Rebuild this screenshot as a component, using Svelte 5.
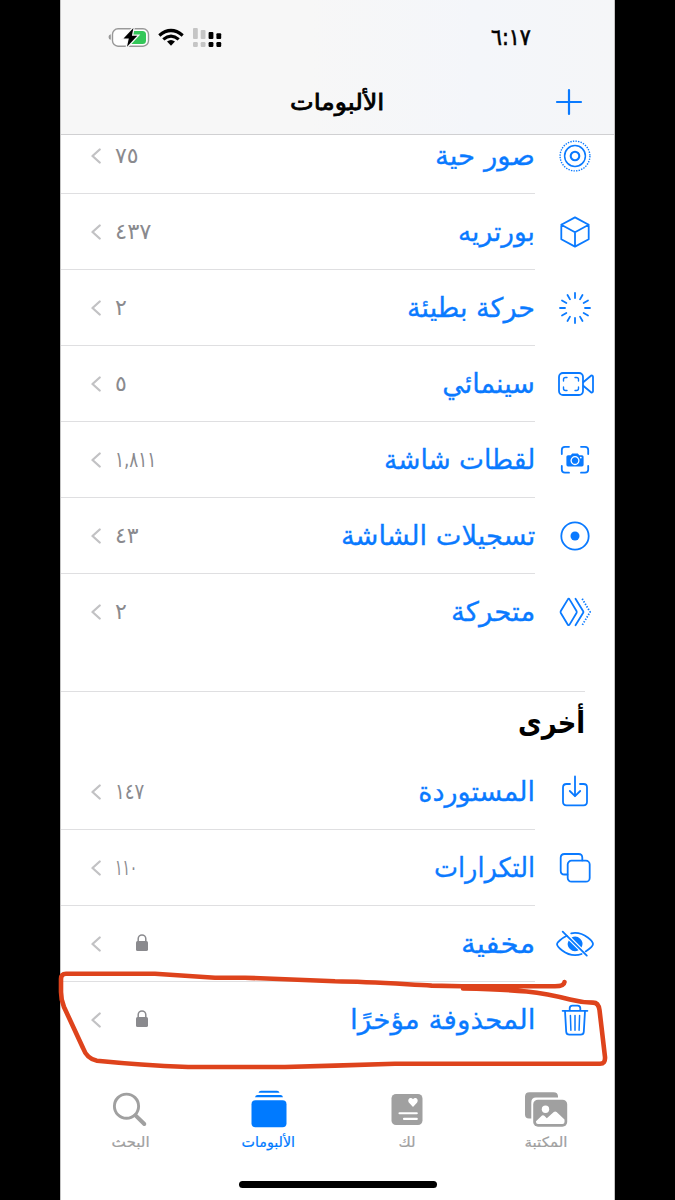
<script>
	// span: drawn width of the text in px
	const mediaTypes = [
		{ icon: 'live', label: 'صور حية', span: 100, count: '٧٥', countSpan: 24 },
		{ icon: 'cube', label: 'بورتريه', span: 77, count: '٤٣٧', countSpan: 36 },
		{ icon: 'slomo', label: 'حركة بطيئة', span: 128, count: '٢', countSpan: 12 },
		{ icon: 'cinematic', label: 'سينمائي', span: 93, count: '٥', countSpan: 12 },
		{ icon: 'screenshot', label: 'لقطات شاشة', span: 151, count: '١,٨١١', countSpan: 41 },
		{ icon: 'recording', label: 'تسجيلات الشاشة', span: 194, count: '٤٣', countSpan: 24 },
		{ icon: 'animated', label: 'متحركة', span: 84, count: '٢', countSpan: 12 }
	];

	const utilities = [
		{ icon: 'import', label: 'المستوردة', span: 117, count: '١٤٧', countSpan: 29 },
		{ icon: 'copies', label: 'التكرارات', span: 101, count: '١١٠', countSpan: 22 },
		{ icon: 'hidden', label: 'مخفية', span: 74, locked: true },
		{ icon: 'trash', label: 'المحذوفة مؤخرًا', span: 185, locked: true }
	];

	const tabs = [
		{ icon: 'library', label: 'المكتبة', span: 43 },
		{ icon: 'foryou', label: 'لك', span: 17 },
		{ icon: 'albums', label: 'الألبومات', span: 54, active: true },
		{ icon: 'search', label: 'البحث', span: 38 }
	];

	const ticks = Array.from({ length: 12 }, (_, i) => i * 30);

	// squeeze the text horizontally to the wanted width
	function fit(node, width) {
		node.style.transform = `scaleX(${width / node.offsetWidth})`;
	}
</script>

{#snippet rowIcon(name)}
	<svg class="row-icon" width="40" height="40" viewBox="-20 -20 40 40">
		{#if name === 'live'}
			<circle r="4.3" stroke-width="2.1" />
			<circle r="10.4" stroke-width="1.5" />
			<circle r="14.9" stroke-width="1.4" stroke-linecap="butt" stroke-dasharray="1.4 1.2" />
		{:else if name === 'cube'}
			<path d="M0-14.6 13.7-7.3V7.3L0 14.6-13.7 7.3V-7.3ZM-13.7-7.3 0 .2 13.7-7.3M0 .2V14.6" />
		{:else if name === 'slomo'}
			{#each ticks as angle}
				<path d="M0-15V-10" transform="rotate({angle})" />
			{/each}
		{:else if name === 'cinematic'}
			<rect x="-16" y="-11" width="24" height="22" rx="4" />
			<path d="M8.5-2 16-8.3Q18-9 18-7V7Q18 9 16 8.3L8.5 2" />
			<path stroke-width="1.4" d="M-11.5-3V-4.5Q-11.5-6.5-9.5-6.5H-8M0-6.5H1.5Q3.5-6.5 3.5-4.5V-3M3.5 3V4.5Q3.5 6.5 1.5 6.5H0M-8 6.5H-9.5Q-11.5 6.5-11.5 4.5V3" />
		{:else if name === 'screenshot'}
			<path d="M-13.2-6V-10Q-13.2-13.2-10-13.2H-6M6-13.2H10Q13.2-13.2 13.2-10V-6M13.2 6V9.5Q13.2 12.7 10 12.7H6M-6 12.7H-10Q-13.2 12.7-13.2 9.5V6" />
			<path class="solid" d="M-7-4.8H-4.3L-2.8-6.6H2.8L4.3-4.8H7Q8.6-4.8 8.6-3.2V4.8Q8.6 6.4 7 6.4H-7Q-8.6 6.4-8.6 4.8V-3.2Q-8.6-4.8-7-4.8Z" />
			<circle class="knockout" cy=".6" r="3.9" />
			<circle class="dot" cx="5.8" cy="-2.4" r=".9" />
		{:else if name === 'recording'}
			<circle r="13.7" />
			<circle class="solid" r="4.5" />
		{:else if name === 'animated'}
			<path d="M-6.3-13.3Q-5.8-13.3-5.3-12.4L1.5-1Q2 0 1.5 1L-5.3 12.4Q-6.3 14-7.3 12.4L-14.2 1Q-14.7 0-14.2-1L-7.3-12.4Q-6.8-13.3-6.3-13.3Z" />
			<path d="M.5-13.2 8.2-.8Q8.7 0 8.2.8L.5 13.2" />
			<path stroke-dasharray="1.4 1.5" stroke-linecap="butt" d="M7.2-13.2 15.1 0 7.2 13.2" />
		{:else if name === 'import'}
			<path d="M-5-8H-8.5Q-12-8-12-4.5V9.8Q-12 13.3-8.5 13.3H8.5Q12 13.3 12 9.8V-4.5Q12-8 8.5-8H5" />
			<path d="M0-15.5V4.2M-5.2-1 0 4.2 5.2-1" />
		{:else if name === 'copies'}
			<path d="M-7.6 6.5H-10.5Q-14.3 6.5-14.3 2.7V-10.2Q-14.3-14 -10.5-14H3.5Q7.3-14 7.3-10.2V-7.6" />
			<rect x="-7.3" y="-7.3" width="22" height="21" rx="3.8" />
		{:else if name === 'hidden'}
			<path d="M-8.2-8.2C-14-5.3-18-1.4-18 0-18 2.5-10 11.2 0 11.2 2.4 11.2 4.6 10.8 6.6 10M-3.8-10.7C-2.6-11-1.3-11.2 0-11.2 10-11.2 18-2.5 18 0 18 1.4 15 4.7 10.6 7.4" />
			<path class="solid" d="M-6.3-3.6A7.3 7.3 0 0 0 3.6 6.3ZM-3.4-6.5A7.3 7.3 0 0 1 6.5 3.4Z" />
			<path d="M-12.3-12.3 11.8 11.6" />
		{:else if name === 'trash'}
			<path d="M-12.4-9.2H12.4M-5.3-9.5V-11.7Q-5.3-14.4-2.6-14.4H2.6Q5.3-14.4 5.3-11.7V-9.5M-10-9-8.8 11.7Q-8.6 14.7-5.6 14.7H5.6Q8.6 14.7 8.8 11.7L10-9" />
			<path stroke-width="1.5" d="M-4.6-4.6-4.1 10.2M0-4.6V10.2M4.6-4.6 4.1 10.2" />
		{/if}
	</svg>
{/snippet}

{#snippet row(item)}
	<li class="row">
		<div class="icon-cell">{@render rowIcon(item.icon)}</div>
		<div class="row-body">
			<span class="label" use:fit={item.span}>{item.label}</span>
			<span class="detail">
				{#if item.locked}
					<svg class="lock" width="12" height="17" viewBox="0 0 12 17">
						<rect y="7" width="12" height="10" rx="1.6" fill="currentColor" />
						<path d="M2.2 8V4.7a3.8 3.8 0 0 1 7.6 0V8" fill="none" stroke="currentColor" stroke-width="1.5" />
					</svg>
				{:else}
					<span class="count" use:fit={item.countSpan}>{item.count}</span>
				{/if}
				<svg class="chevron" width="10" height="16" viewBox="0 0 10 16">
					<path d="M8.7 1.5 1.5 8l7.2 6.5" />
				</svg>
			</span>
		</div>
	</li>
{/snippet}

<div class="phone" dir="rtl">
	<header>
		<div class="status">
			<span class="time"><span class="clock" use:fit={40}>٦:١٧</span></span>
			<svg class="status-icons" width="116" height="24" viewBox="0 0 116 24">
				<path d="M2.8 9.2Q.5 9.6.5 12t2.3 2.8Z" fill="#999" />
				<rect x="4.5" y="3.8" width="36" height="17.4" rx="5.5" fill="#fff" stroke="#999" stroke-width="1.4" />
				<path d="M22 6H34.5Q38 6 38 9.5V15.5Q38 19 34.5 19H22Z" fill="#34c759" />
				<path d="M25.4 3 15.5 13.6h5.3L19 21.8 29.3 10.8h-5.4Z" fill="#000" stroke="#f7f7f7" stroke-width="2.6" paint-order="stroke" />
				<g fill="none" stroke="#000" stroke-width="3.2">
					<path d="M51.3 10.4Q63 .6 74.7 10.4" />
					<path d="M55.3 14.4Q63 7.9 70.7 14.4" />
				</g>
				<path d="M59 16.6Q63 13.5 67 16.6L63 20.8Z" />
				<g fill="#c5c5c5">
					<rect x="85" y="3" width="4.8" height="11" rx="1" />
					<rect x="85" y="17" width="4.8" height="5" rx="1.2" />
					<rect x="92.7" y="5" width="4.8" height="9" rx="1" />
					<rect x="92.7" y="17" width="4.8" height="5" rx="1.2" />
				</g>
				<rect x="100.6" y="7" width="4.8" height="7" rx="1" />
				<rect x="100.6" y="17" width="4.8" height="5" rx="1.2" />
				<rect x="108.4" y="8.3" width="4.8" height="5.7" rx="1" />
				<rect x="108.4" y="17" width="4.8" height="5" rx="1.2" />
			</svg>
		</div>
		<div class="navbar">
			<svg class="add" width="28" height="28" viewBox="0 0 28 28">
				<path d="M14 2V26M2 14H26" />
			</svg>
			<h1><span class="heading" use:fit={94}>الألبومات</span></h1>
		</div>
	</header>

	<main>
		<ul class="media">
			{#each mediaTypes as item}
				{@render row(item)}
			{/each}
		</ul>

		<section>
			<h2><span class="section-title" use:fit={67}>أخرى</span></h2>
			<ul>
				{#each utilities as item}
					{@render row(item)}
				{/each}
			</ul>
		</section>
	</main>

	<nav>
		{#each tabs as tab}
			<div class="tab" class:active={tab.active}>
				<svg width="44" height="40" viewBox="0 0 44 40" fill="currentColor">
					{#if tab.icon === 'library'}
						<path d="M5 28.6Q1 28.6 1 24.6V6.5Q1 2.2 5.5 2.2H29.5Q34 2.2 34 6.5V7.6H12Q7.3 7.6 7.3 12.5V28.6Z" />
						<rect x="9.2" y="9.7" width="34" height="27" rx="4.8" />
						<circle cx="21.5" cy="19.3" r="3.7" fill="#fff" />
						<path d="M12 31.2 18 25.6Q19.2 24.8 20.3 25.8L22.8 28.2 29.8 22Q31.2 20.9 32.6 22L40.5 29.5V32Q40.5 34 38.5 34H14Q12 34 12 32Z" fill="#fff" />
					{:else if tab.icon === 'foryou'}
						<rect x="6.5" y="4" width="31" height="31" rx="4.5" />
						<path d="M28 17 24.3 13.1C22.3 10.7 23.6 8 25.7 8Q27.2 8 28 9.3 28.8 8 30.3 8C32.4 8 33.7 10.7 31.7 13.1Z" fill="#fff" />
						<path d="M14.5 23.2H31.8M19 28.9H31.8" stroke="#fff" stroke-width="2.1" stroke-linecap="round" />
					{:else if tab.icon === 'albums'}
						<path d="M11.5 2.7Q12 .8 14 .8H30Q32 .8 32.5 2.7ZM8 7.3Q8.5 5 10.5 5H33.5Q35.5 5 36 7.3Z" />
						<rect x="4.5" y="10.3" width="35" height="27" rx="4" />
					{:else}
						<circle cx="18.5" cy="16.2" r="12.1" fill="none" stroke="currentColor" stroke-width="2.9" />
						<path d="M27.5 25.3 36.3 34" stroke="currentColor" stroke-width="4" stroke-linecap="round" />
					{/if}
				</svg>
				<span class="tab-label"><span class="tab-text" use:fit={tab.span}>{tab.label}</span></span>
			</div>
		{/each}
	</nav>
	<div class="home-indicator"></div>
</div>

<!-- hand-drawn marker loop around the last row -->
<svg class="marker" width="675" height="1200" viewBox="0 0 675 1200">
	<path d="M564.5 982Q564 986.3 555 986.3H462L431.7 985.6C400 984 370 981.8 335 981.3L245 977.7H215L155 973.7H66Q61 973.7 61 979V992Q61 1000 64 1007L83 1048Q87 1059 97 1060.7 140 1065 188 1067H285L335 1065.6 395 1063.7H600Q605.5 1063.7 605 1057L599.5 1010Q598.5 1002.6 593 1002.6 582 1002.6 570 999.5C540 992 520 989.5 463 988.5" />
</svg>

<style>
	:global(body) {
		background: #000;
		font-family: 'DejaVu Sans', sans-serif;
	}

	.phone {
		box-sizing: border-box;
		width: 555px;
		height: 1200px;
		margin-left: 60px;
		overflow: hidden;
		background: #fff;
		border-left: 1px solid #c4c4c4;
		border-right: 1px solid #c4c4c4;
		display: flex;
		flex-direction: column;
	}

	header {
		position: relative;
		z-index: 1;
		flex: none;
		box-sizing: border-box;
		height: 135px;
		background: linear-gradient(90deg, #f7f7f7 45%, #f4f6fa 75%, #f5f6f8);
		border-bottom: 1px solid #d0d0d2;
	}

	.status {
		display: flex;
		justify-content: space-between;
		align-items: center;
		height: 74px;
		padding: 0 83px 0 47px;
	}

	.status-icons {
		display: block;
	}

	.time {
		display: flex;
		width: 40px;
	}

	.clock,
	.label,
	.count,
	.heading,
	.section-title,
	.tab-text {
		display: inline-block;
		flex: none;
		white-space: nowrap;
		transform-origin: right center;
	}

	.clock {
		font-size: 23px;
		line-height: 28px;
		-webkit-text-stroke: 0.6px #000;
	}

	.navbar {
		display: grid;
		grid-template-columns: 60px 1fr 60px;
		align-items: center;
		height: 56px;
	}

	.add {
		margin-right: 31px;
		fill: none;
		stroke: #0a7aff;
		stroke-width: 2.2;
		stroke-linecap: round;
	}

	h1,
	h2 {
		margin: 0;
		font-weight: 700;
	}

	h1 {
		display: flex;
		justify-content: center;
		font-size: 23px;
		font-weight: 400;
		line-height: 30px;
		-webkit-text-stroke: 0.8px #000;
	}

	.heading {
		transform-origin: center;
	}

	main {
		flex: none;
		margin-top: -17px;
	}

	ul {
		list-style: none;
		margin: 0;
		padding: 0;
	}

	.row {
		display: flex;
		height: 76px;
	}

	.icon-cell {
		width: 79px;
		display: flex;
		align-items: center;
		justify-content: center;
	}

	.row-icon {
		fill: none;
		stroke: #0a7aff;
		stroke-width: 1.8;
		stroke-linecap: round;
		stroke-linejoin: round;
	}

	.solid {
		fill: #0a7aff;
		stroke: none;
	}

	.knockout {
		stroke: #fff;
		stroke-width: 1.3;
	}

	.dot {
		fill: #fff;
		stroke: none;
	}

	.row-body {
		flex: 1;
		box-sizing: border-box;
		display: flex;
		justify-content: space-between;
		align-items: center;
		padding-left: 30px;
		border-bottom: 1px solid #dfdfe1;
	}

	.row:last-child .row-body {
		border-bottom-color: transparent;
	}

	.label {
		color: #0a7aff;
		font-size: 27px;
		line-height: 40px;
		-webkit-text-stroke: 0.3px #0a7aff;
	}

	.detail {
		display: flex;
		align-items: center;
		gap: 14px;
		color: #8a8a8e;
	}

	.count {
		direction: ltr;
		font-size: 22px;
		line-height: 30px;
		transform-origin: left center;
	}

	.lock {
		margin: 0 0 3px 21px;
	}

	.chevron {
		fill: none;
		stroke: #c2c2c4;
		stroke-width: 2.3;
		stroke-linecap: round;
		stroke-linejoin: round;
	}

	section {
		margin-top: 41px;
	}

	h2 {
		box-sizing: border-box;
		height: 63px;
		margin-right: 29px;
		padding-top: 9px;
		border-top: 1px solid #dfdfe1;
		font-size: 30px;
		line-height: 44px;
	}

	nav {
		flex: none;
		display: grid;
		grid-template-columns: repeat(4, 138.5px);
		margin: 32px -1px 0 0;
	}

	.tab {
		display: flex;
		flex-direction: column;
		align-items: center;
		color: #a0a0a0;
	}

	.tab svg {
		display: block;
	}

	.tab.active {
		color: #007aff;
	}

	.tab-label {
		display: flex;
		justify-content: center;
		margin-top: 1px;
		font-size: 14px;
		line-height: 22px;
		-webkit-text-stroke: 0.2px currentColor;
	}

	.tab-text {
		transform-origin: center;
	}

	.home-indicator {
		width: 198px;
		height: 7px;
		margin: 28px auto 0;
		border-radius: 4px;
		background: #000;
	}

	.marker {
		position: absolute;
		top: 0;
		left: 0;
		fill: none;
		stroke: #de431c;
		stroke-width: 4.6;
		stroke-linecap: round;
		stroke-linejoin: round;
		pointer-events: none;
	}
</style>
